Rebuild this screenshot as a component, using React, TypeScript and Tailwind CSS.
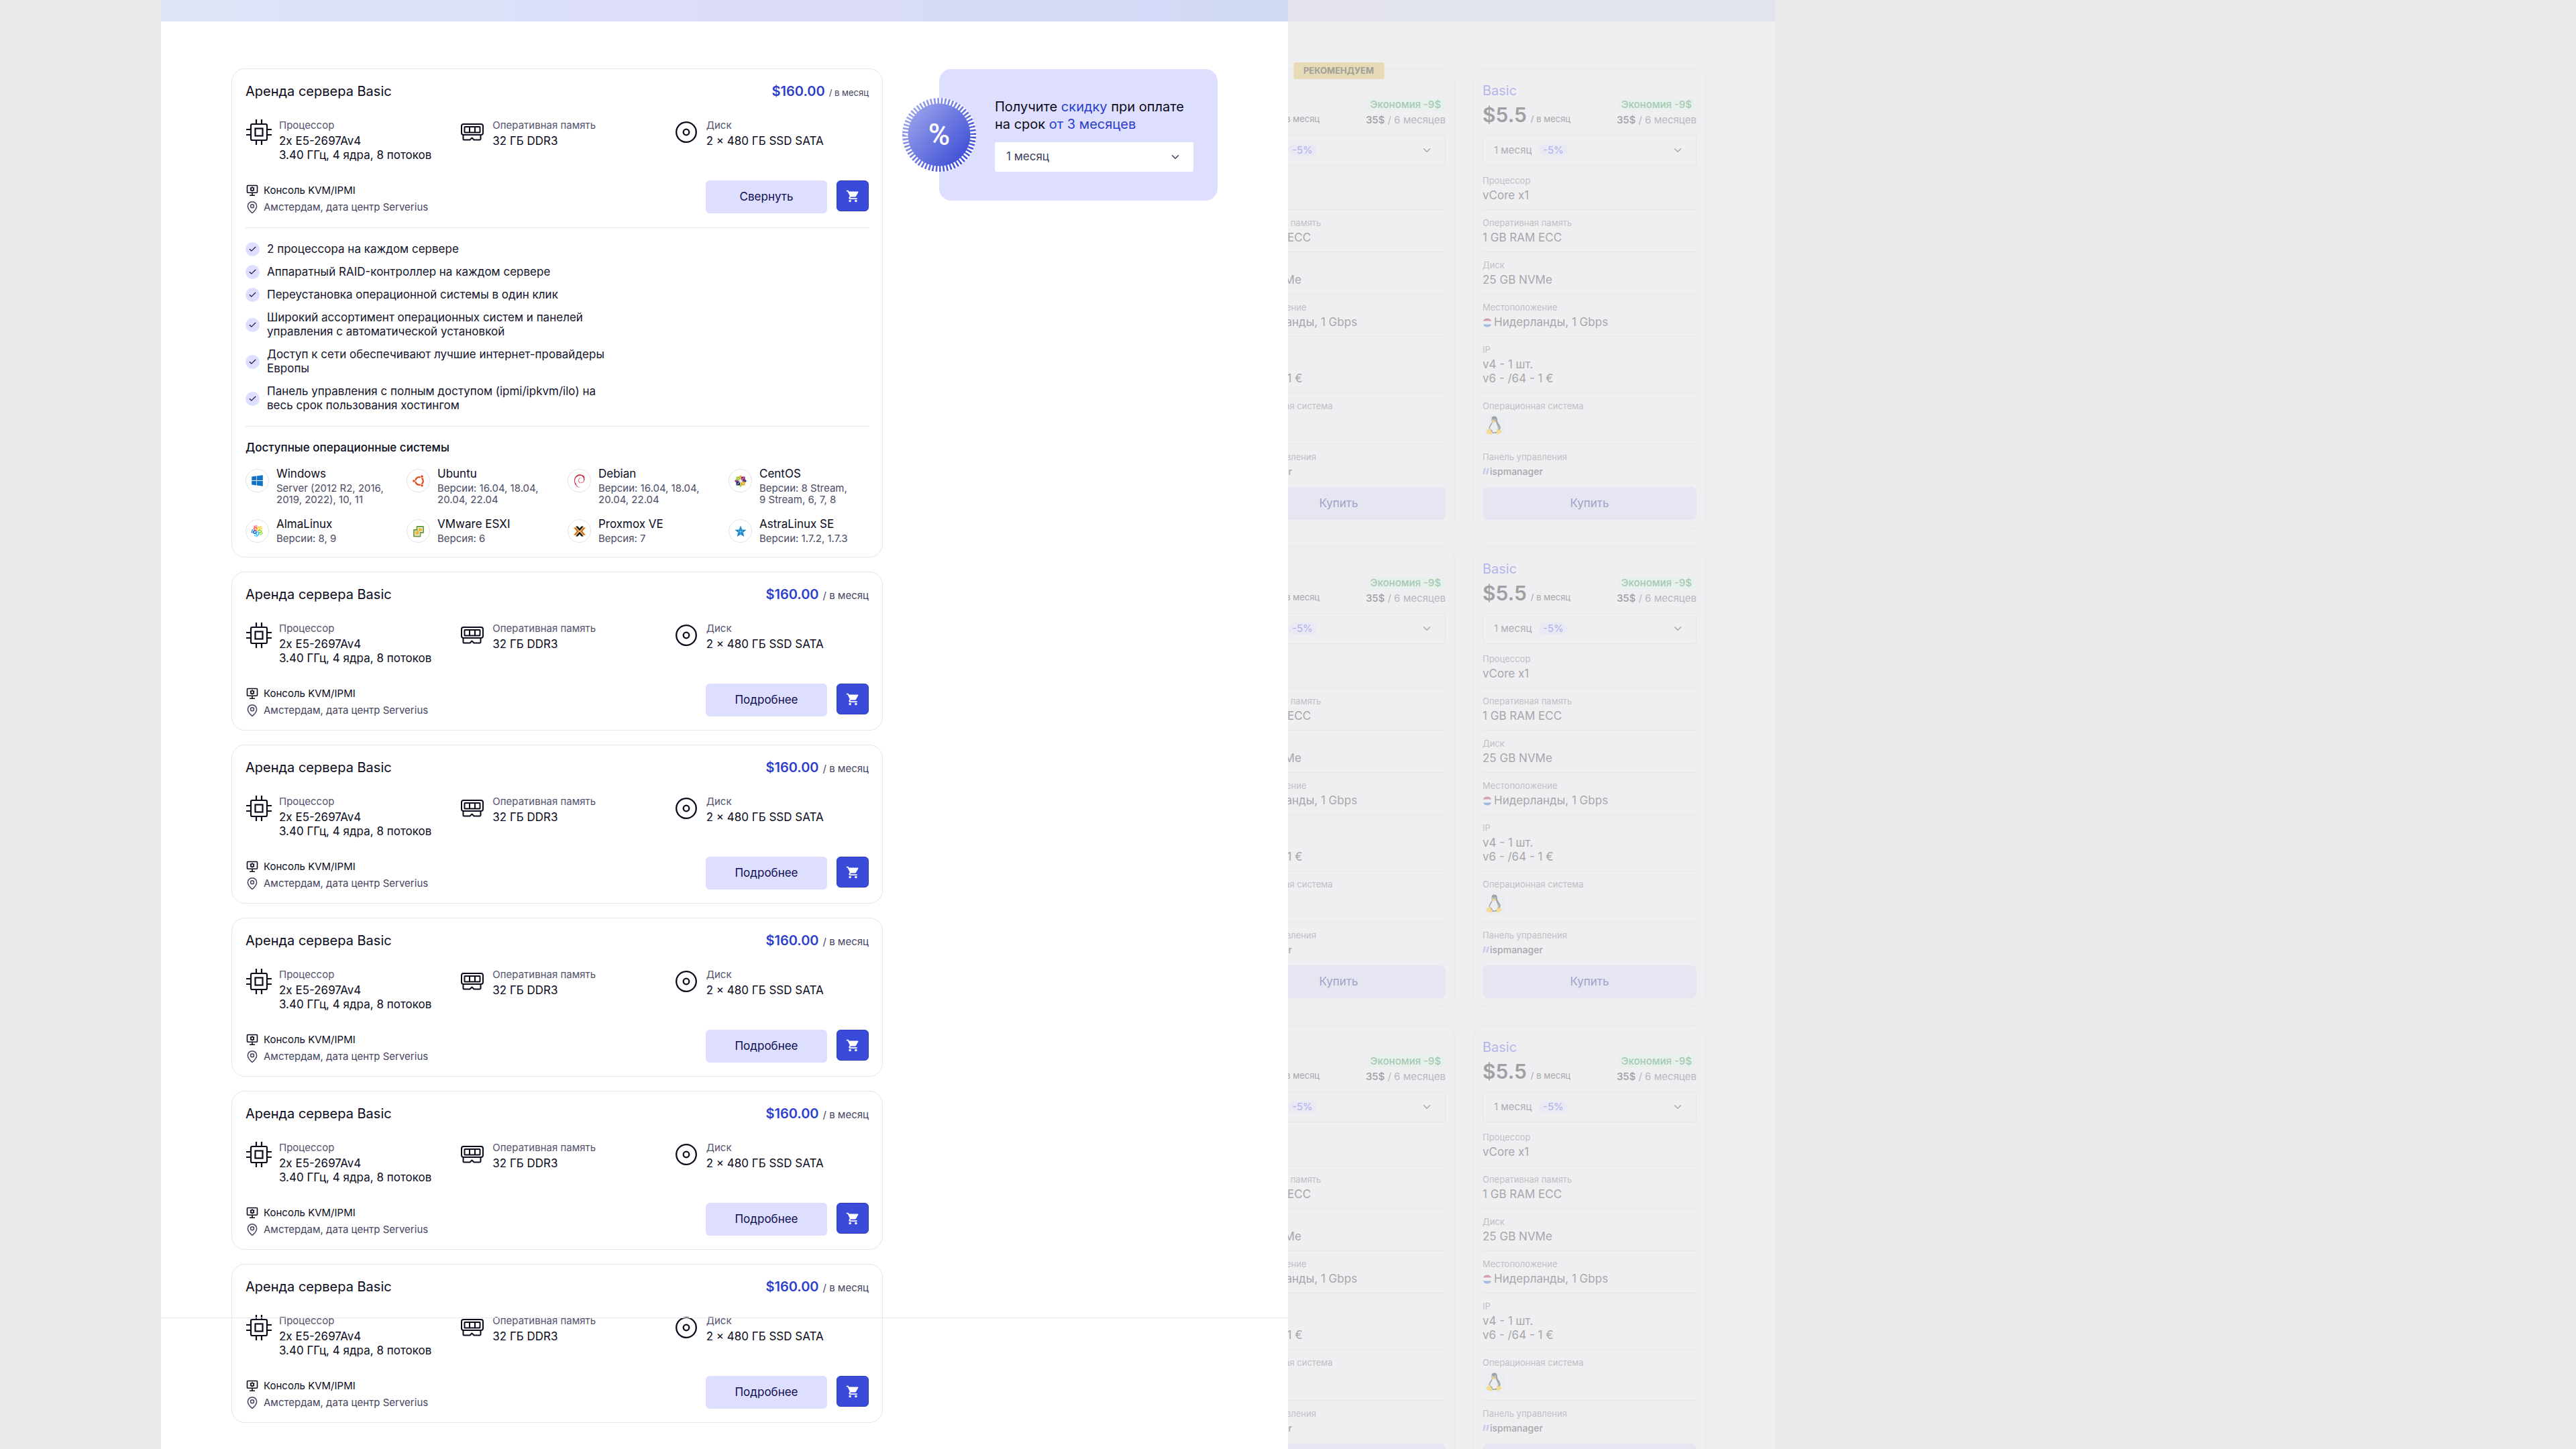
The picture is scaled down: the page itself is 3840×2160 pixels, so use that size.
import React from "react";
import { Check, ChevronDown, MapPin } from "lucide-react";
import { MdShoppingCart } from "react-icons/md";
import { FaWindows } from "react-icons/fa";
import { SiDebian } from "react-icons/si";
import { FcLinux } from "react-icons/fc";

/* ---------- spec icons ---------- */

function CpuIcon() {
  return (
    <svg width="38" height="38" viewBox="0 0 38 38" fill="none" stroke="#0b0b1c" strokeWidth="2.2" aria-hidden="true">
      <rect x="7" y="7" width="24" height="24" rx="2" />
      <rect x="13.5" y="13.5" width="11" height="11" />
      <path d="M15 0v7M23 0v7M15 31v7M23 31v7M0 15h7M0 23h7M31 15h7M31 23h7" />
    </svg>
  );
}

function RamIcon() {
  return (
    <svg width="34" height="26" viewBox="0 0 34 26" fill="none" stroke="#0b0b1c" strokeWidth="2" aria-hidden="true">
      <rect x="1" y="1" width="32" height="16" rx="3" />
      <rect x="5.5" y="5" width="23" height="8.5" rx="0.5" />
      <path d="M13 5v8.5M21 5v8.5" />
      <path d="M3.5 17v6a1.500 1.500 0 0 0 1.500 1.500h8.500l3-3 3 3H28a1.500 1.500 0 0 0 1.500-1.500v-6" strokeLinejoin="round" />
    </svg>
  );
}

function DiskIcon() {
  return (
    <svg width="32" height="32" viewBox="0 0 32 32" fill="none" stroke="#0b0b1c" strokeWidth="2.3" aria-hidden="true">
      <circle cx="16" cy="16" r="14.8" />
      <circle cx="16" cy="16" r="4.3" />
    </svg>
  );
}

function ConsoleIcon() {
  return (
    <svg width="18" height="18" viewBox="0 0 18 18" fill="none" stroke="#0b0b1c" strokeWidth="1.6" aria-hidden="true">
      <rect x="1.5" y="1.5" width="15" height="10.8" rx="1" />
      <circle cx="9" cy="6.9" r="2.1" />
      <path d="M9 3.2v1.4M9 9.2v1.4M5.8 5l1.2.7M11 8.1l1.2.7M5.8 8.8L7 8.1M11 5.7l1.2-.7M9 12.3v3.5M5 16.2h8" />
    </svg>
  );
}

/* ---------- operating system logos ---------- */

function UbuntuLogo() {
  return (
    <svg width="18" height="18" viewBox="0 0 18 18" fill="none" aria-hidden="true">
      <circle cx="10" cy="9" r="5.8" stroke="#dd4814" strokeWidth="2.2" />
      <path d="M10 9L0 9M10 9l5-8.700M10 9l5 8.700" stroke="#fff" strokeWidth="1.2" />
      <circle cx="10" cy="9" r="4.2" fill="#fff" />
      <g fill="#dd4814" stroke="#fff" strokeWidth="0.7">
        <circle cx="2" cy="9" r="2.1" />
        <circle cx="14" cy="2.2" r="2.1" />
        <circle cx="14" cy="15.8" r="2.1" />
      </g>
    </svg>
  );
}

function CentosLogo() {
  return (
    <svg width="18" height="18" viewBox="0 0 18 18" aria-hidden="true">
      <path d="M2.5 2.5h5.800v5.800H2.500z" fill="#9ccd2a" />
      <path d="M9.700 2.500h5.800v5.800H9.700z" fill="#932279" />
      <path d="M9.700 9.700h5.800v5.800H9.700z" fill="#efa724" />
      <path d="M2.500 9.700h5.800v5.800H2.500z" fill="#262577" />
      <path d="M9 0l2.500 2.500H9.700v3L9 6.500l-.7-1v-3H6.500z" fill="#efa724" />
      <path d="M18 9l-2.500 2.500V9.700h-3l-1-.7 1-.7h3V6.500z" fill="#262577" />
      <path d="M9 18l-2.500-2.500h1.800v-3l.7-1 .7 1v3h1.800z" fill="#9ccd2a" />
      <path d="M0 9l2.500-2.500v1.800h3l1 .7-1 .7h-3v1.800z" fill="#932279" />
      <path d="M4 4l10 10M14 4L4 14" stroke="#fff" strokeWidth="0.9" />
    </svg>
  );
}

const almaArms = [
  { color: "#ff4649", angle: -36 },
  { color: "#ffcb12", angle: 36 },
  { color: "#86da2f", angle: 108 },
  { color: "#24c2ff", angle: 180 },
  { color: "#0069da", angle: 252 },
];

function AlmaLogo() {
  return (
    <svg width="19" height="19" viewBox="-10 -10 20 20" fill="none" strokeLinecap="round" aria-hidden="true">
      {almaArms.map((arm) => (
        <g key={arm.color} transform={`rotate(${arm.angle})`} stroke={arm.color}>
          <path d="M-0.5 -1.5C-3.5 -3 -3 -7 0 -6.5C2 -6 2 -4 1 -3.5" strokeWidth="1.6" />
          <circle cx="0.8" cy="-8.5" r="0.5" strokeWidth="1.2" />
          <path d="M3 -7.5l1 .8" strokeWidth="1.5" />
        </g>
      ))}
    </svg>
  );
}

function VmwareLogo() {
  return (
    <svg width="18" height="18" viewBox="0 0 18 18" fill="none" aria-hidden="true">
      <path d="M6.500 2H16v9h-4.500v5.500H2V7h4.500z" fill="#fff" stroke="#6a9f3a" strokeWidth="1.8" strokeLinejoin="round" />
      <rect x="8.5" y="4.3" width="5.5" height="4.5" fill="#f3b53b" />
      <rect x="4" y="9" width="5.5" height="5" fill="#f3b53b" />
      <path d="M7.500 6v4h4" stroke="#a7c957" strokeWidth="1" />
    </svg>
  );
}

function ProxmoxLogo() {
  return (
    <svg width="18" height="18" viewBox="0 0 18 18" aria-hidden="true">
      <path d="M3 1.500h3.200L9 4.800l2.800-3.300H15L9 8.500z" fill="#111" />
      <path d="M3 16.500h3.200L9 13.200l2.800 3.300H15L9 9.500z" fill="#111" />
      <path d="M0 3.300h3.400L8.200 9l-4.800 5.700H0L4.800 9z" fill="#e57000" />
      <path d="M18 3.300h-3.400L9.800 9l4.800 5.700H18L13.200 9z" fill="#e57000" />
    </svg>
  );
}

function AstraLogo() {
  return (
    <svg width="18" height="18" viewBox="0 0 18 18" aria-hidden="true">
      <path d="M9 .5l2.400 5.900 6.300.4-4.900 4 1.600 6.300L9 13.700l-5.400 3.400 1.600-6.300-4.900-4 6.300-.4z" fill="#1b87c9" />
      <path d="M9 13.700V4.500M5.200 10.800L13 8M12.800 10.800L5 8" stroke="#7cc3ea" strokeWidth="0.7" fill="none" />
    </svg>
  );
}

/* ---------- data ---------- */

const specs = [
  { label: "Процессор", lines: ["2x E5-2697Av4", "3.40 ГГц, 4 ядра, 8 потоков"], icon: <CpuIcon /> },
  { label: "Оперативная память", lines: ["32 ГБ DDR3"], icon: <RamIcon /> },
  { label: "Диск", lines: ["2 × 480 ГБ SSD SATA"], icon: <DiskIcon /> },
];

const features = [
  "2 процессора на каждом сервере",
  "Аппаратный RAID-контроллер на каждом сервере",
  "Переустановка операционной системы в один клик",
  "Широкий ассортимент операционных систем и панелей управления с автоматической установкой",
  "Доступ к сети обеспечивают лучшие интернет-провайдеры Европы",
  "Панель управления с полным доступом (ipmi/ipkvm/ilo) на весь срок пользования хостингом",
];

const systems = [
  { name: "Windows", versions: "Server (2012 R2, 2016,\n2019, 2022), 10, 11", logo: <FaWindows size={19} color="#1272c8" /> },
  { name: "Ubuntu", versions: "Версии: 16.04, 18.04,\n20.04, 22.04", logo: <UbuntuLogo /> },
  { name: "Debian", versions: "Версии: 16.04, 18.04,\n20.04, 22.04", logo: <SiDebian size={20} color="#c8233f" /> },
  { name: "CentOS", versions: "Версии: 8 Stream,\n9 Stream, 6, 7, 8", logo: <CentosLogo /> },
  { name: "AlmaLinux", versions: "Версии: 8, 9", logo: <AlmaLogo /> },
  { name: "VMware ESXI", versions: "Версия: 6", logo: <VmwareLogo /> },
  { name: "Proxmox VE", versions: "Версия: 7", logo: <ProxmoxLogo /> },
  { name: "AstraLinux SE", versions: "Версии: 1.7.2, 1.7.3", logo: <AstraLogo /> },
];

/* ---------- server cards ---------- */

function ServerCard({ expanded = false }: { expanded?: boolean }) {
  return (
    <article className="rounded-[20px] border border-[#e6e6ea] bg-white px-5 pt-[19px] pb-[19px]">
      <header className="flex items-baseline justify-between">
        <h2 className="text-xl text-[#0b0b1c]">Аренда сервера Basic</h2>
        <p className={`${expanded ? "text-[13px]" : "text-[15px]"} leading-5 text-[#45455f]`}>
          <span className="mr-[6px] text-xl font-semibold text-[#2c3ecb]">$160.00</span>/ в месяц
        </p>
      </header>

      <div className="mt-[27px] grid grid-cols-3 gap-[26px]">
        {specs.map((spec) => (
          <div key={spec.label} className="flex items-start gap-[10px]">
            <div className="flex size-10 shrink-0 items-center justify-center">{spec.icon}</div>
            <div>
              <p className="text-[15px] leading-5 text-[#54546e]">{spec.label}</p>
              <div className="mt-[3px] text-[17px] leading-[21px] whitespace-nowrap text-[#0b0b1c]">
                {spec.lines.map((line) => (
                  <p key={line}>{line}</p>
                ))}
              </div>
            </div>
          </div>
        ))}
      </div>

      <div className="mt-[27px] flex items-start justify-between">
        <div className="flex flex-col gap-[5px] pt-[5px] text-[15px] leading-5">
          <p className="flex items-center gap-[7px] text-[#0b0b1c]">
            <span className="flex w-5 justify-center"><ConsoleIcon /></span>
            Консоль KVM/IPMI
          </p>
          <p className="flex items-center gap-[7px] text-[#45455f]">
            <MapPin size={20} strokeWidth={1.8} aria-hidden="true" />
            Амстердам, дата центр Serverius
          </p>
        </div>
        <div className="flex items-start gap-[14px]">
          <button type="button" className="h-[49px] w-[181px] rounded-md bg-[#dedffe] text-[17px] text-[#0d0d52]">
            {expanded ? "Свернуть" : "Подробнее"}
          </button>
          <button type="button" aria-label="В корзину" className="flex h-[46px] w-12 items-center justify-center rounded-md border border-[#2b3cc4] bg-[#3a4bd9] text-white">
            <MdShoppingCart size={21} />
          </button>
        </div>
      </div>

      {expanded && (
        <>
          <ul className="mt-5 flex flex-col gap-[13px] border-t border-[#e6e6ea] pt-[21px]">
            {features.map((text) => (
              <li key={text} className="flex items-center gap-[11px]">
                <span className="flex size-[21px] shrink-0 items-center justify-center rounded-full bg-[#dedffe]">
                  <Check size={13} strokeWidth={2} color="#0d0d52" aria-hidden="true" />
                </span>
                <span className="max-w-[520px] text-[17px] leading-[21px] text-[#14142b]">{text}</span>
              </li>
            ))}
          </ul>
          <section className="mt-5 border-t border-[#e6e6ea] pt-[21px]">
            <h3 className="text-[17px] leading-[21px] font-medium text-[#0b0b1c]">Доступные операционные системы</h3>
            <ul className="mt-[18px] grid grid-cols-4 gap-x-[31px] gap-y-[18px]">
              {systems.map((os) => (
                <li key={os.name} className="flex items-start gap-[11px]">
                  <span className="mt-[3px] flex size-[35px] shrink-0 items-center justify-center rounded-full border border-[#e3e3e6]">
                    {os.logo}
                  </span>
                  <div className="whitespace-pre">
                    <p className="text-[17px] leading-[21px] text-[#0b0b1c]">{os.name}</p>
                    <p className="mt-[2px] text-[15px] leading-[17px] text-[#4b4b66]">{os.versions}</p>
                  </div>
                </li>
              ))}
            </ul>
          </section>
        </>
      )}
    </article>
  );
}

/* ---------- discount promo ---------- */

function DiscountPromo() {
  return (
    <aside className="relative mt-px w-[415px] shrink-0 rounded-[18px] bg-[#dedffe] py-[43px] pr-9 pl-[83px]">
      <div className="absolute top-1/2 left-0 flex size-[110px] -translate-x-1/2 -translate-y-1/2 items-center justify-center">
        <svg className="absolute inset-0" width="110" height="110" viewBox="0 0 110 110" fill="none" aria-hidden="true">
          <defs>
            <linearGradient id="seal" x1="10" y1="20" x2="95" y2="95" gradientUnits="userSpaceOnUse">
              <stop offset="0" stopColor="#9aa3ea" />
              <stop offset="1" stopColor="#3d4cd6" />
            </linearGradient>
          </defs>
          <circle cx="55" cy="55" r="55" fill="url(#seal)" />
          <circle cx="55" cy="55" r="51" stroke="#fff" strokeWidth="9" pathLength="120" strokeDasharray="1 1" />
        </svg>
        <span className="relative font-['Roboto',sans-serif] text-[44px] leading-none font-medium text-white">%</span>
      </div>
      <label htmlFor="term" className="block text-xl leading-[26px] text-[#0b0b1c]">
        Получите <span className="text-[#2c3ecb]">скидку</span> при оплате
        <br />
        на срок <span className="text-[#2c3ecb]">от 3 месяцев</span>
      </label>
      <div className="relative mt-[14px]">
        <select id="term" className="h-11 w-full appearance-none rounded-[3px] bg-white pl-[17px] text-[17px] text-[#40405c]">
          <option>1 месяц</option>
        </select>
        <ChevronDown size={18} strokeWidth={2} color="#40405c" className="pointer-events-none absolute top-[13px] right-[18px]" aria-hidden="true" />
      </div>
    </aside>
  );
}

/* ---------- muted VPS plans ---------- */

function PlanRow({ label, children }: { label: string; children: React.ReactNode }) {
  return (
    <div className="border-t border-[#e7e7ea] pt-[10px] pb-[10px] first:border-transparent">
      <dt className="text-[13px] leading-[18px] text-[#c0c0c5]">{label}</dt>
      <dd className="mt-[3px] text-[17px] leading-[21px] text-[#a7a7ab]">{children}</dd>
    </div>
  );
}

function PlanCard({ id, recommended = false }: { id: string; recommended?: boolean }) {
  return (
    <article className="relative w-[347px] shrink-0 rounded-[18px] border border-[#e9e9ec] px-[13px] pt-[18px] pb-3">
      {recommended && (
        <span className="absolute -top-[10px] left-1/2 flex h-[25px] w-[135px] -translate-x-1/2 items-center justify-center rounded-[3px] bg-[#e6dbb6] text-[13px] font-bold text-[#a19f99]">
          РЕКОМЕНДУЕМ
        </span>
      )}
      <header className="flex items-end justify-between">
        <div>
          <h2 className="text-xl text-[#b6b7ea]">Basic</h2>
          <p className="mt-1 text-[13px] leading-5 whitespace-nowrap text-[#a7a7ab]">
            <span className="mr-[6px] text-[30px] leading-9 font-semibold text-[#a0a0a4]">$5.5</span>/ в месяц
          </p>
        </div>
        <div className="flex flex-col items-end gap-1 text-[15px] whitespace-nowrap">
          <p className="mr-[3px] rounded-sm bg-[#e8f0ec] px-1 leading-[18px] font-medium text-[#a4cab3]">Экономия -9$</p>
          <p className="leading-5 text-[#b8b8be]"><span className="font-medium text-[#a0a0a4]">35$</span> / 6 месяцев</p>
        </div>
      </header>
      <div className="relative mt-3">
        <select id={id} aria-label="Срок аренды" className="h-[46px] w-full appearance-none rounded-[4px] border border-[#e7e7ea] bg-transparent pl-4 text-[15px] text-[#aeaeb2]">
          <option>1 месяц</option>
        </select>
        <span className="pointer-events-none absolute top-[14px] left-[84px] rounded-[9px] bg-[#e9e9f3] px-[6px] text-[15px] leading-[18px] text-[#b0b0ec]">-5%</span>
        <ChevronDown size={18} strokeWidth={2} color="#a8a8ac" className="pointer-events-none absolute top-[14px] right-[19px]" aria-hidden="true" />
      </div>
      <dl className="mt-[2px]">
        <PlanRow label="Процессор">vCore x1</PlanRow>
        <PlanRow label="Оперативная память">1 GB RAM ECC</PlanRow>
        <PlanRow label="Диск">25 GB NVMe</PlanRow>
        <PlanRow label="Местоположение">
          <span className="flex items-center gap-[3px]">
            <svg width="14" height="14" viewBox="0 0 14 14" aria-hidden="true">
              <path d="M.7 4.500a7 7 0 0 1 12.600 0z" fill="#d5a1ac" />
              <path d="M.7 9.500a7 7 0 0 0 12.600 0z" fill="#a3b9dd" />
            </svg>
            Нидерланды, 1 Gbps
          </span>
        </PlanRow>
        <PlanRow label="IP">
          v4 - 1 шт.
          <br />
          v6 - /64 - 1 €
        </PlanRow>
        <PlanRow label="Операционная система">
          <span className="flex size-[34px] items-center justify-center rounded-[5px] bg-[#ebedf0]">
            <FcLinux size={36} className="shrink-0 opacity-40" title="Linux" />
          </span>
        </PlanRow>
        <PlanRow label="Панель управления">
          <span className="flex items-center gap-px text-sm leading-[19px] font-medium">
            <svg width="10" height="9" viewBox="0 0 10 9" aria-hidden="true">
              <path d="M2 0h3L3 9H0zM7 0h3L8 9H5z" fill="#c9cdee" />
            </svg>
            ispmanager
          </span>
        </PlanRow>
      </dl>
      <button type="button" className="mt-1 h-[49px] w-full rounded-lg bg-[#e6e6f3] text-[17px] text-[#a2a2c4]">Купить</button>
    </article>
  );
}

/* ---------- page ---------- */

export default function App() {
  return (
    <div className="flex h-screen overflow-hidden bg-[#e9e9eb] font-['Inter',sans-serif]">
      <div className="flex-[240]" />
      <main className="relative min-w-0 flex-[1680] bg-white">
        <div className="h-8 bg-linear-to-r from-[#dde6f7] via-[#dcdcfa] to-[#d1d9f5]" />
        <div className="flex items-start gap-[84px] px-[105px] pt-[70px]">
          <div className="flex min-w-0 flex-1 flex-col gap-[21px]">
            <ServerCard expanded />
            <ServerCard />
            <ServerCard />
            <ServerCard />
            <ServerCard />
            <ServerCard />
          </div>
          <DiscountPromo />
        </div>
        <div className="absolute inset-x-0 top-[1964px] h-px bg-[#e8e8ea]" />
      </main>
      <section aria-label="Тарифы VPS" className="min-w-0 flex-[727] overflow-hidden bg-[#efeff1]">
        <div className="h-8 bg-linear-to-r from-[#e4e4ed] via-[#e2e5ed] to-[#e1e4ed]" />
        <div className="flex flex-col gap-[27px] pt-[70px] pr-[104px]">
          {["a", "b", "c"].map((row) => (
            <div key={row} className="flex justify-end gap-[27px]">
              <PlanCard id={`term-${row}-1`} recommended={row === "a"} />
              <PlanCard id={`term-${row}-2`} />
            </div>
          ))}
        </div>
      </section>
      <div className="flex-[1193]" />
    </div>
  );
}
